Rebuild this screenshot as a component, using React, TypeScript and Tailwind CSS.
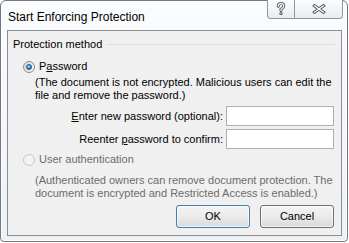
function Radio({ checked, disabled }: { checked?: boolean; disabled?: boolean }) {
  return (
    <span
      className={`flex h-[12px] w-[12px] shrink-0 items-center justify-center rounded-full border ${
        disabled
          ? "border-[#c9c9c9] bg-[#f3f3f3]"
          : "border-[#8b8b8b] bg-gradient-to-br from-[#d6d6d6] to-[#fafafa]"
      }`}
    >
      {checked && (
        <span className="h-[6px] w-[6px] rounded-full border border-[#1f4e86] bg-[radial-gradient(circle_at_40%_35%,#b9e1ff,#2a72c4_70%)]" />
      )}
    </span>
  );
}

function Btn({ label, primary }: { label: string; primary?: boolean }) {
  return (
    <button
      type="button"
      className={`h-[23px] w-[74px] rounded-[3px] border bg-gradient-to-b from-[#f3f3f3] via-[#ebebeb] to-[#d9d9d9] text-[11px] leading-[13px] text-black shadow-[inset_0_0_0_1px_rgba(255,255,255,0.7)] ${
        primary ? "border-[#3c7fb1]" : "border-[#707070]"
      }`}
    >
      {label}
    </button>
  );
}

export default function App() {
  return (
    <div className="h-[243px] w-[349px] bg-white font-['Liberation_Sans',Arial,sans-serif] text-[11px] leading-[13px] text-black">
      <div className="flex h-[242px] w-[348px] flex-col rounded-t-[6px] rounded-b-[4px] border border-[#6e7782] bg-gradient-to-b from-[#fbfcfd] to-[#eef1f4] shadow-[inset_0_0_0_1px_rgba(255,255,255,0.9)]">
        {/* title bar */}
        <div className="flex h-[29px] shrink-0 items-start">
          <div className="pl-[7px] pt-[8px] text-[12px] leading-[16px]">Start Enforcing Protection</div>
          <div className="-mt-px ml-auto mr-[4px] flex h-[19px] rounded-b-[4px] border border-t-0 border-[#8d98a4] bg-gradient-to-b from-[#fdfdfd] to-[#e8ecf0]">
            <div className="flex w-[26px] items-center justify-center">
              <svg width="10" height="14" viewBox="0 0 10 14">
                <path d="M2.2 4.2 Q2.2 1.6 5 1.6 Q7.8 1.6 7.8 4.1 Q7.8 5.6 5 7.2 L5 8.6" fill="none" stroke="#5b5f66" strokeWidth="3" strokeLinecap="round" />
                <circle cx="5" cy="11.6" r="1.7" fill="#5b5f66" />
                <path d="M2.2 4.2 Q2.2 1.6 5 1.6 Q7.8 1.6 7.8 4.1 Q7.8 5.6 5 7.2 L5 8.6" fill="none" stroke="#ffffff" strokeWidth="1.1" strokeLinecap="round" />
                <circle cx="5" cy="11.6" r="0.6" fill="#ffffff" />
              </svg>
            </div>
            <div className="flex w-[48px] items-center justify-center border-l border-[#8d98a4]">
              <svg width="14" height="10" viewBox="0 0 14 10">
                <path d="M2.5 1.8 L11.5 8.2 M11.5 1.8 L2.5 8.2" stroke="#5b5f66" strokeWidth="3.2" strokeLinecap="square" />
                <path d="M2.5 1.8 L11.5 8.2 M11.5 1.8 L2.5 8.2" stroke="#ffffff" strokeWidth="1.2" strokeLinecap="square" />
              </svg>
            </div>
          </div>
        </div>

        {/* client area */}
        <div className="ml-[6px] mr-[5px] flex h-[206px] flex-col border border-[#8a8f96] bg-[#f0f0f0]">
          <div className="flex items-center pl-[5px] pr-[6px] pt-[7px]">
            <span>Protection method</span>
            <span className="ml-[6px] h-px flex-1 bg-[#d5dfe5]" />
          </div>

          <div className="mt-[9px] flex items-center gap-[4px] pl-[15px]">
            <Radio checked />
            <span>
              P<span className="underline">a</span>ssword
            </span>
          </div>
          <div className="mt-[3px] whitespace-nowrap pl-[27px]">
            (The document is not encrypted. Malicious users can edit the
            <br />
            file and remove the password.)
          </div>

          <div className="mt-[4px] flex flex-col gap-[3px] pr-[7px]">
            <div className="flex items-center justify-end gap-[3px]">
              <span>
                <span className="underline">E</span>nter new password (optional):
              </span>
              <input type="password" className="h-[20px] w-[108px] border border-[#abadb3] bg-white outline-none" />
            </div>
            <div className="flex items-center justify-end gap-[3px]">
              <span>
                Reenter <span className="underline">p</span>assword to confirm:
              </span>
              <input type="password" className="h-[20px] w-[108px] border border-[#abadb3] bg-white outline-none" />
            </div>
          </div>

          <div className="mt-[4px] flex items-center gap-[4px] pl-[15px] text-[#6d6d6d]">
            <Radio disabled />
            <span>User authentication</span>
          </div>
          <div className="mt-[8px] whitespace-nowrap pl-[27px] text-[#6d6d6d]">
            (Authenticated owners can remove document protection. The
            <br />
            document is encrypted and Restricted Access is enabled.)
          </div>

          <div className="mt-[5px] flex justify-end gap-[10px] pr-[7px]">
            <Btn label="OK" primary />
            <Btn label="Cancel" />
          </div>
        </div>
      </div>
    </div>
  );
}
